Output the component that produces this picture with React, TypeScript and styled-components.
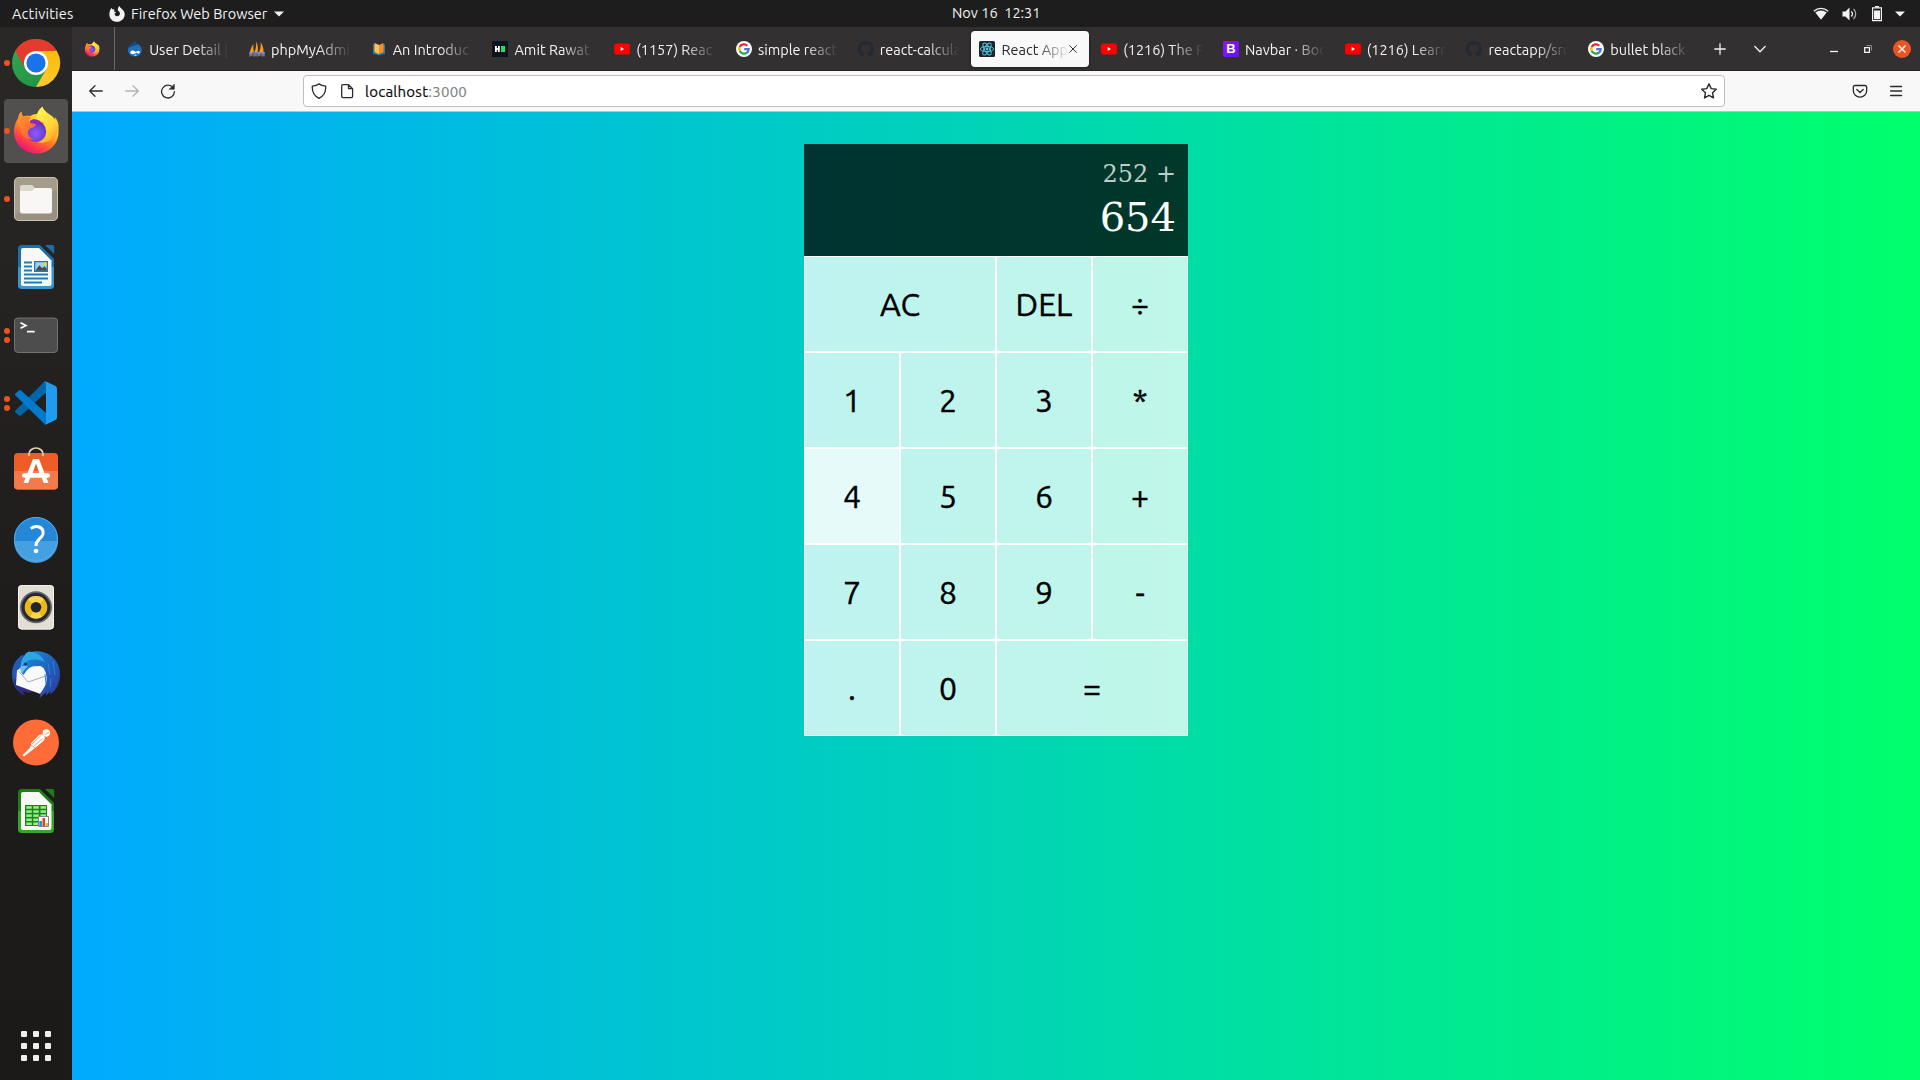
import React from 'react';
import styled, { createGlobalStyle, css } from 'styled-components';

const UI_FONT = `Ubuntu, "Noto Sans", "Open Sans", sans-serif`;

const GlobalStyle = createGlobalStyle`
  *, *::before, *::after { box-sizing: border-box; }
  html, body { margin: 0; padding: 0; overflow: hidden; background: #1d1d1d; }
  button { font: inherit; color: inherit; border: 0; padding: 0; background: none; }
  svg { display: block; flex: none; }
`;

const Desktop = styled.div`
  width: 1920px;
  height: 1080px;
  display: grid;
  grid-template: 27px 1053px / 72px 1848px;
  font-family: ${UI_FONT};
  overflow: hidden;
`;

/* ---------- top bar ---------- */

const TopBar = styled.header`
  grid-column: 1 / -1;
  display: grid;
  grid-template-columns: 952px 1fr auto;
  align-items: center;
  background: #1d1d1d;
  color: #f2f2f2;
  font-size: 14.5px;
  line-height: 27px;
  white-space: pre;
`;

const BarLeft = styled.div`
  display: flex;
  align-items: center;
  padding-left: 12px;
`;

const Activities = styled.span`
  width: 97px;
  letter-spacing: 0.2px;
`;

const AppName = styled.span`
  width: 144px;
  padding-left: 6px;
`;

const Clock = styled.span`
  line-height: 25px;
  padding-bottom: 2px;
`;

const BarRight = styled.div`
  display: flex;
  align-items: center;
  padding-right: 15px;
`;

const Spacer = styled.span<{ $w: number }>`
  width: ${(p) => p.$w}px;
  flex: none;
`;

/* ---------- dock ---------- */

const Dock = styled.nav`
  display: flex;
  flex-direction: column;
  align-items: center;
  gap: 4px;
  padding: 4px 0 2px;
  background: linear-gradient(#2a2826, #1e1d1b 55%, #1b1a19);
`;

const DockItem = styled.div<{ $active?: boolean }>`
  position: relative;
  width: 64px;
  height: 64px;
  flex: none;
  border-radius: 4px;
  background: ${(p) => (p.$active ? '#51504e' : 'transparent')};
`;

const Dots = styled.span`
  position: absolute;
  left: 0;
  top: 0;
  bottom: 0;
  display: flex;
  flex-direction: column;
  justify-content: center;
  gap: 3px;
`;

const Dot = styled.i`
  width: 6px;
  height: 6px;
  border-radius: 50%;
  background: #e95420;
`;

const AppsGrid = styled.div`
  margin-top: auto;
  margin-bottom: 17px;
  display: grid;
  grid-template-columns: repeat(3, 6px);
  gap: 6px;
`;

const AppsDot = styled.i`
  height: 6px;
  border-radius: 1px;
  background: #efefed;
`;

/* ---------- browser ---------- */

const Browser = styled.main`
  display: flex;
  flex-direction: column;
`;

const TabStrip = styled.div`
  height: 44px;
  display: flex;
  align-items: center;
  background: #323031;
  border-bottom: 1px solid #232122;
  color: #f4f4f4;
  font-size: 14.5px;
`;

const PinnedTab = styled.div`
  width: 43px;
  height: 43px;
  display: flex;
  align-items: center;
  padding-left: 12px;
  border-right: 1px solid #6b6a6b;
  margin-right: 2.2px;
`;

const Tab = styled.div<{ $active?: boolean }>`
  width: 117.75px;
  height: 36px;
  margin: 0 2px;
  padding: 0 8px;
  flex: none;
  display: flex;
  align-items: center;
  border-radius: 4px;
  ${(p) =>
    p.$active &&
    css`
      background: #f9f9f9;
      color: #2a2a2e;
      box-shadow: 0 0 3px rgba(0, 0, 0, 0.6);
    `}
`;

const TabLabel = styled.span`
  flex: 1;
  min-width: 0;
  margin-left: 6px;
  overflow: hidden;
  white-space: nowrap;
  line-height: 22px;
  padding-top: 2px;
  mask-image: linear-gradient(to left, transparent 0, #000 32px);
`;

const Toolbar = styled.div`
  height: 41px;
  display: flex;
  align-items: center;
  background: #f8f8f8;
  border-bottom: 1px solid #c4c0bf;
`;

const UrlBar = styled.div`
  width: 1422px;
  height: 32px;
  display: flex;
  align-items: center;
  padding: 0 7px;
  border: 1px solid #bebebe;
  border-radius: 4px;
  background: #fff;
`;

const Url = styled.span`
  flex: 1;
  padding: 1px 0 0 10px;
  font-size: 15px;
  letter-spacing: 0.25px;
  line-height: 22px;
  color: #0c0c0d;
  -webkit-text-stroke: 0.2px currentColor;
`;

const Port = styled.span`
  color: #858585;
`;

const Page = styled.section`
  flex: 1;
  padding-top: 32px;
  background: linear-gradient(to right, #00aaff, #00ff6c);
`;

/* ---------- calculator ---------- */

const Calculator = styled.div`
  display: grid;
  justify-content: center;
  grid-template-columns: repeat(4, 96px);
  grid-template-rows: 112px repeat(5, 96px);
`;

const Output = styled.div`
  grid-column: 1 / -1;
  display: flex;
  flex-direction: column;
  align-items: flex-end;
  gap: 6px;
  padding: 16px 12px 12px;
  background: rgba(0, 0, 0, 0.75);
  font-family: "DejaVu Serif", serif;
`;

const Previous = styled.div`
  color: rgba(255, 255, 255, 0.75);
  font-size: 24px;
  line-height: 28px;
`;

const Current = styled.div`
  color: #fff;
  font-size: 40px;
  line-height: 47px;
`;

const Key = styled.button<{ $wide?: boolean; $hover?: boolean }>`
  grid-column: span ${(p) => (p.$wide ? 2 : 1)};
  border: 1px solid #fff;
  background: rgba(255, 255, 255, ${(p) => (p.$hover ? 0.9 : 0.75)});
  background-clip: padding-box;
  color: #000;
  font-family: ${UI_FONT};
  font-size: 32px;
  line-height: 40px;
  padding-bottom: 1px;
  -webkit-text-stroke: 0.4px #000;
`;

/* ---------- small icons ---------- */

const FirefoxArt = () => (
  <>
    <defs>
      <linearGradient id="ffBody" x1="0.85" y1="0.1" x2="0.3" y2="1">
        <stop offset="0" stopColor="#fff04a" />
        <stop offset="0.3" stopColor="#ffc02b" />
        <stop offset="0.55" stopColor="#ff7a25" />
        <stop offset="0.8" stopColor="#ff3750" />
        <stop offset="1" stopColor="#e5107c" />
      </linearGradient>
      <radialGradient id="ffGlobe" cx="0.5" cy="0.6" r="0.6">
        <stop offset="0" stopColor="#9059ff" />
        <stop offset="0.6" stopColor="#6e45d8" />
        <stop offset="1" stopColor="#5b35b0" />
      </radialGradient>
      <linearGradient id="ffTail" x1="0.2" y1="0" x2="0.8" y2="1">
        <stop offset="0" stopColor="#fff44f" />
        <stop offset="0.6" stopColor="#ffd338" />
        <stop offset="1" stopColor="#ff9a28" />
      </linearGradient>
      <linearGradient id="ffHead" x1="0" y1="0" x2="1" y2="1">
        <stop offset="0" stopColor="#ff9a1f" />
        <stop offset="0.6" stopColor="#ff7139" />
        <stop offset="1" stopColor="#ff4a4a" />
      </linearGradient>
    </defs>
    <path fill="url(#ffBody)" d="M10 33c0-6 1.500-10 4-13.500 .3-3 1.700-5.500 3.500-7 0 2 .5 3.800 1.500 5 3 -1 5-.8 7-.3 6-4 12-2 16 3l9.500 3c2.500 4 3.200 7 3 10.500C54 46 44.500 54.500 32.500 54.500 20 54.500 10 45 10 33z" />
    <path fill="url(#ffTail)" d="M38.500 7.500c-5 4-6.500 8.500-6 13.500 5 .5 9 4 9.500 9.500.6 6-3 11-8 13 9 1 18.500-4 20.500-13 .8-5-.8-9-3.500-12.500l.3 2.500c-1.500-2-3-3.300-5.300-4.800-4-2.700-6.700-5-7.500-8.200z" />
    <circle cx="31.700" cy="32.500" r="10.500" fill="url(#ffGlobe)" />
    <path fill="#8a2bc0" d="M26 22c3-2.800 8-2 11.500 1.500l2.500.5c-2 1-3.500 1.500-5 3-3-2-6-1.500-9-1z" />
    <path fill="url(#ffHead)" d="M14 19.500c1-2 2-3.500 3.500-7 0 2 .5 4 1.700 5.200 3-.8 5.300-.5 7.300.6-1 1.500-1.500 3-1.300 4.700 2 1.500 4.300 1.600 6.800 2-1.500 4-5 3.500-7 5.500-3 4 .5 9 5.500 10-8 1.500-14-4-14-11-2.500-3-3.500-6-2.500-10z" />
  </>
);

const FirefoxSmall = () => (
  <svg width="16" height="16" viewBox="8 7 48 49">
    <FirefoxArt />
  </svg>
);

const FirefoxMono = () => (
  <svg width="16" height="16" viewBox="0 0 16 16">
    <path fill="#f2f2f2" fillRule="evenodd" d="M1.200 4 2.600 1.800 3.200 3.300 5.600 3.500 5 5.400 7.200 6.200 5.600 7.600C5.500 9 6.400 10.200 8 10.300c2 0 3.200-1.500 2.900-3.200C10.600 5.700 9.500 5 8.800 4.600 8.600 2.600 9.400 1 10.700.1c.3 1.900 1.700 2.400 2.900 3.600C15 5 15.800 6.700 15.700 8.500 15.500 12.700 12.200 15.800 8 15.800 3.700 15.800.4 12.500.4 8.400.4 6.700.6 5.200 1.200 4z" />
  </svg>
);

const Caret = () => (
  <svg width="10" height="6" viewBox="0 0 10 6">
    <path fill="#f2f2f2" d="M0 .5h10L5 5.500z" />
  </svg>
);

const Wifi = () => (
  <svg width="16" height="14" viewBox="0 0 16 14">
    <path fill="none" stroke="#f2f2f2" strokeWidth="1.300" d="M.8 4.300C5 .3 11 .3 15.200 4.300" />
    <path fill="#f2f2f2" d="M2.300 5.500c3.400-2.800 8-2.800 11.400 0L8 12.800z" />
  </svg>
);

const Volume = () => (
  <svg width="16" height="14" viewBox="0 0 16 14">
    <path fill="#f2f2f2" d="M.5 4.500h3L7.500.5v13l-4-4h-3z" />
    <path fill="none" stroke="#f2f2f2" strokeWidth="1.300" d="M9.300 4.500c1.300 1.400 1.300 3.600 0 5" />
    <path fill="none" stroke="#aaa" strokeWidth="1.300" d="M11.500 2c2.900 2.800 2.900 7.200 0 10" />
  </svg>
);

const Battery = () => (
  <svg width="10" height="16" viewBox="0 0 10 16">
    <path fill="#f2f2f2" d="M3 0h4v1.500H3z" />
    <path fill="none" stroke="#f2f2f2" strokeWidth="1.200" d="M.6 1.900h8.800v12.700H.6z" />
    <path fill="#f2f2f2" d="M2 4.500h6v8.700H2z" />
  </svg>
);

const Fav = ({ children }: { children: React.ReactNode }) => (
  <svg width="16" height="16" viewBox="0 0 16 16">
    {children}
  </svg>
);

const Drupal = () => (
  <Fav>
    <path fill="#1f6fbf" d="M7.600.5c1.200 1.700 2.300 2 3.800 3 2 1.300 3.400 3.200 3.400 5.700 0 3.600-3 6.300-6.900 6.300S.9 12.700.9 9.200c0-2.500 1.500-4.600 3.500-5.800C6 2.500 7.100 2 7.600.5z" />
    <path fill="#0d4c8c" d="M7.600.5c1.200 1.700 2.300 2 3.800 3C8.500 4.300 4.600 5 1.500 7c.5-1.600 1.600-2.800 2.900-3.600C6 2.500 7.100 2 7.600.5z" />
    <path fill="#fff" d="M3.300 11.300c.2-1.500 2-2.100 3.400-1.500 1.100.4 1.600 1 2.200 1 .9 0 1.500-1 2.600-1 1.100 0 1.600.8 1.300 1.800-.3 1-1.300 1.400-2.100.8-.7-.5-1.100-.8-1.800-.3-1 .7-1.700 1.100-3.100 1.100-1.500 0-2.600-.6-2.500-1.900zM7 14.200c1 .6 2 .6 3 0-.8-.8-2-.8-3 0z" />
  </Fav>
);

const PhpMyAdmin = () => (
  <Fav>
    <path fill="#f79a1b" d="M4.500 3C2.500 6 1.500 8 .8 11.300L5 11C4.200 8 4.200 5.500 4.500 3zM7.200.5c1.800 3.500 2.200 7 1.300 10.700H5.300C7 7.700 7.300 4.300 7.200.5zM11.500 1c2.300 3.300 3.200 6.500 3 10.200H10c1.500-3.200 2-6.500 1.500-10.200z" />
    <path fill="none" stroke="#7b7fc0" strokeWidth="1.200" d="M1 15.500v-3.300h2v2H1M5 15.500v-3.300M5 14h2m0-2v3.500M9 15.500v-3.300h2v2H9M13 15.500v-3.300h2v3.300M13 14h2" />
    <path fill="#a9a9cf" d="M0 11.400h16v.9H0z" />
  </Fav>
);

const Book = () => (
  <Fav>
    <path fill="#2d7fa8" d="M2 3.300l6 1.400 6-1.400v9.500L8 14.300l-6-1.500z" />
    <path fill="#ffc24a" d="M3.500 2 8 4v9l-4.500-2z" />
    <path fill="#f28f2c" d="M12.500 2 8 4v9l4.500-2z" />
  </Fav>
);

const HackerRank = () => (
  <Fav>
    <path fill="#0e141e" d="M0 0h16v16H0z" />
    <path fill="#fff" d="M3 5h1.800v2H6V5h1.800v6H6V9H4.800v2H3z" />
    <path fill="#1ee35b" d="M9 5h4v6H9z" />
  </Fav>
);

const YouTube = () => (
  <Fav>
    <rect x="0" y="2.500" width="16" height="11" rx="2.800" fill="#f00" />
    <path fill="#fff" d="M6.700 6v4l3.300-2z" />
  </Fav>
);

const Google = () => (
  <Fav>
    <circle cx="8" cy="8" r="8" fill="#fff" />
    <g fill="none" strokeWidth="2.300">
      <path stroke="#ea2a33" d="M3.700 6.100A4.700 4.700 0 0 1 11.300 4.700" />
      <path stroke="#fbbc05" d="M3.800 10.100A4.700 4.700 0 0 1 3.700 6" />
      <path stroke="#22a852" d="M3.700 9.900A4.700 4.700 0 0 0 11 11.600" />
      <path stroke="#5470e8" d="M8.200 8.100h4.500A4.700 4.700 0 0 1 10.800 11.800" />
    </g>
  </Fav>
);

const GitHub = () => (
  <Fav>
    <path fill="#24292e" d="M8 0C3.580 0 0 3.580 0 8c0 3.540 2.290 6.530 5.470 7.590.4.070.55-.17.55-.38v-1.490c-2.010.37-2.530-.49-2.690-.94-.09-.23-.48-.94-.82-1.130-.28-.15-.68-.52-.01-.53.63-.01 1.080.58 1.230.82.72 1.210 1.870.87 2.330.66.070-.52.28-.87.51-1.070-1.780-.2-3.640-.89-3.640-3.950 0-.87.31-1.590.82-2.150-.08-.2-.36-1.020.08-2.120 0 0 .67-.21 2.200.82a7.600 7.600 0 0 1 4 0c1.530-1.040 2.200-.82 2.200-.82.44 1.100.16 1.920.08 2.120.51.56.82 1.270.82 2.150 0 3.070-1.870 3.750-3.650 3.950.29.25.54.73.54 1.480v2.200c0 .21.15.46.55.38A8 8 0 0 0 16 8c0-4.420-3.580-8-8-8z" />
  </Fav>
);

const ReactFav = () => (
  <Fav>
    <rect width="16" height="16" rx="1.500" fill="#20232a" />
    <g fill="none" stroke="#54c8e4" strokeWidth="0.9">
      <ellipse cx="8" cy="8" rx="6.700" ry="2.600" />
      <ellipse cx="8" cy="8" rx="6.700" ry="2.600" transform="rotate(60 8 8)" />
      <ellipse cx="8" cy="8" rx="6.700" ry="2.600" transform="rotate(120 8 8)" />
    </g>
    <circle cx="8" cy="8" r="1.400" fill="#54c8e4" />
  </Fav>
);

const BootstrapBox = styled.span`
  width: 16px;
  height: 16px;
  flex: none;
  border-radius: 2px;
  background: linear-gradient(135deg, #9013fe, #6610f2);
  color: #fff;
  font: bold 13px/16px "Liberation Sans", sans-serif;
  text-align: center;
`;

const CloseTab = () => (
  <svg width="8" height="8" viewBox="0 0 8 8">
    <path stroke="#333" strokeWidth="1" d="M.3.300 7.700 7.700M7.700.300.3 7.700" />
  </svg>
);

const StripIcon = ({ w, children }: { w: number; children: React.ReactNode }) => (
  <svg width={w} height={w} viewBox={`0 0 ${w} ${w}`} fill="none" stroke="#f4f4f4" strokeWidth="1.300">
    {children}
  </svg>
);

const ToolIcon = ({ color = '#2b2a2e', children }: { color?: string; children: React.ReactNode }) => (
  <svg width="16" height="16" viewBox="0 0 16 16" fill="none" stroke={color} strokeWidth="1.300" strokeLinecap="round" strokeLinejoin="round">
    {children}
  </svg>
);

/* ---------- dock icons, each drawn on a 64px canvas ---------- */

const Canvas = ({ children }: { children: React.ReactNode }) => (
  <svg width="64" height="64" viewBox="0 0 64 64">
    {children}
  </svg>
);

const ChromeIcon = () => (
  <Canvas>
    <defs>
      <linearGradient id="crG" x1="0" y1="0" x2="1" y2="1"><stop offset="0" stopColor="#34a853" /><stop offset="1" stopColor="#1e8e3e" /></linearGradient>
      <linearGradient id="crY" x1="0" y1="0" x2="0" y2="1"><stop offset="0" stopColor="#fbbc04" /><stop offset="1" stopColor="#fcc934" /></linearGradient>
    </defs>
    <circle cx="32" cy="32" r="24" fill="url(#crG)" />
    <path fill="url(#crY)" d="M32 20h20.800A24 24 0 0 1 32 56L42.400 38z" />
    <path fill="#e33b2e" d="M11.200 20A24 24 0 0 1 52.800 20H32L21.600 38z" />
    <circle cx="32" cy="32" r="12" fill="#fff" />
    <circle cx="32" cy="32" r="9.600" fill="#1a73e8" />
  </Canvas>
);

const FilesIcon = () => (
  <Canvas>
    <rect x="10" y="10" width="44" height="44" rx="5" fill="#a49d8c" />
    <path fill="#989181" d="M10.500 48 53 22v27a5 5 0 0 1-5 5H15.500a5 5 0 0 1-5-5z" />
    <rect x="10.500" y="10.500" width="43" height="43" rx="4.500" fill="none" stroke="#c9c3b5" />
    <path fill="#dcd8cf" d="M16 20q0-2 2-2h10l3.500 3.500V28H16z" />
    <path fill="#f8f7f5" d="M16 24h12l3-3h15q2 0 2 2v21q0 2.500-2.500 2.500h-27Q16 46.500 16 44z" />
  </Canvas>
);

const Sheet = ({ dark, light, children }: { dark: string; light: string; children: React.ReactNode }) => (
  <Canvas>
    <path fill={dark} d="M18 10h18l14 14v26a4 4 0 0 1-4 4H18a4 4 0 0 1-4-4V14a4 4 0 0 1 4-4z" />
    <path fill={light} d="M14 32h36v18a4 4 0 0 1-4 4H18a4 4 0 0 1-4-4z" />
    <path fill={dark} d="M41 10h7.500a1.700 1.700 0 0 1 1.700 1.700V19z" />
    <path fill="#f8f8f7" d="M19 13h16l12.500 12.500V49q0 2-2 2H19q-2 0-2-2V15q0-2 2-2z" />
    {children}
  </Canvas>
);

const WriterIcon = () => (
  <Sheet dark="#1c6fa8" light="#3b95cc">
    <path fill="#1c7cb8" d="M20 26.500h8v2h-8zM20 30.500h8v2h-8zM20 34.500h8v2h-8zM20 38.500h24v2H20zM20 42.500h24v2H20zM20 46.500h18v2H20z" />
    <path fill="#1c7cb8" d="M30 26h14v11H30z" />
    <path fill="#9dd3f2" d="M31.300 27.300h11.400v8.400H31.300z" />
    <circle cx="41.300" cy="29" r="1.700" fill="#f6d32d" />
    <path fill="#4b4b4b" d="m31.300 35.700 4-5.500 3 3 2-2 2.400 2.500v2z" />
  </Sheet>
);

const CalcSheetIcon = () => (
  <Sheet dark="#1e7d14" light="#37a42c">
    <path fill="#158915" d="M21 26h22v21H21z" />
    <g fill="#9eea8c">
      {[27.2, 31.3, 35.4, 39.5, 43.5].map((y) =>
        [22.300, 29.300, 36.500].map((x) => <rect key={`${x}-${y}`} x={x} y={y} width="5.500" height="2.500" />),
      )}
    </g>
    <path fill="#fff" stroke="#858585" d="M34.500 37.500h10v10h-10z" />
    <path fill="#2d8fd4" d="M35.300 42h2.700v5h-2.700z" />
    <path fill="#d2491e" d="M38.500 39h2.500v8h-2.500z" />
    <path fill="#f0b429" d="M41.500 44h2.500v3h-2.500z" />
  </Sheet>
);

const TerminalIcon = () => (
  <Canvas>
    <rect x="10.500" y="15" width="43" height="34.500" rx="3.500" fill="#4d4d4d" stroke="#727272" />
    <path fill="none" stroke="#fff" strokeWidth="1.700" d="m16.500 19.700 5.500 2.800-5.500 2.800M23 28.700h7.700" />
  </Canvas>
);

const CodeIcon = () => (
  <Canvas>
    <path fill="#0065a9" d="M42 10.500v11L17 44.500q-1 .8-2 0l-3.500-3q-1-1 0-2L39.500 11.500z" />
    <path fill="#007acc" d="M42 53V42L17 19.500q-1-.8-2 0l-3.500 3q-1 1 0 2L39.500 52z" />
    <path fill="#1f9cf0" d="M42 10.500 51.500 15q1.500.8 1.500 2.500v29q0 1.700-1.500 2.500L42 53.500q-1.500.4-2.800-.9 2.800 1 2.800-1.500V13q0-2.500-2.800-1.500Q40.500 10 42 10.500z" />
  </Canvas>
);

const SoftwareIcon = () => (
  <Canvas>
    <path fill="#ee5d26" d="M14 14h36a4 4 0 0 1 4 4v28.500a4 4 0 0 1-4 4H14a4 4 0 0 1-4-4V18a4 4 0 0 1 4-4z" />
    <path fill="#f37a4b" d="M10 32h44v14.500a4 4 0 0 1-4 4H14a4 4 0 0 1-4-4z" />
    <path fill="none" stroke="#e6cfa6" strokeWidth="1.700" d="M25 17v-2a7 6 0 0 1 14 0v2" />
    <path fill="#fff" fillRule="evenodd" d="M29 20h6l9.500 24h-4.800l-2.500-6.500H26.800L24.300 44h-4.800zM32 24.500 28.600 34h6.800z" />
    <rect x="18" y="34.200" width="28" height="4.600" rx="2.300" fill="#fff" />
  </Canvas>
);

const HelpIcon = () => (
  <Canvas>
    <circle cx="32" cy="32" r="22" fill="#2487d8" />
    <path fill="#45a0e2" d="M10 34h44a22 22 0 0 1-44 0z" />
    <circle cx="32" cy="32" r="21.500" fill="none" stroke="#58a9e6" />
    <path fill="none" stroke="#fff" strokeWidth="3" d="M26.700 21.500c3-2 6-2.500 8.500-1.500 4 1.500 5.300 6 2.500 9.500-2.500 3-5.700 4-5.700 9.500" />
    <circle cx="32" cy="44" r="2.300" fill="#fff" />
  </Canvas>
);

const MusicIcon = () => (
  <Canvas>
    <rect x="14" y="10" width="36" height="44.500" rx="4" fill="#e2ded4" />
    <rect x="14.500" y="10.500" width="35" height="43.500" rx="3.500" fill="none" stroke="#f3f1ec" />
    <circle cx="32" cy="32.300" r="16" fill="#62646c" />
    <circle cx="32" cy="32.300" r="14.300" fill="#262932" />
    <circle cx="32" cy="32.300" r="11.300" fill="#e9b91c" />
    <path fill="#f5d552" d="M32 32.300 24 24.300a11.300 11.300 0 0 1 16 0zM32 32.300l-6 9.500a11.300 11.300 0 0 0 12 0z" />
    <circle cx="32" cy="32.300" r="5.300" fill="#24262b" />
  </Canvas>
);

const ThunderbirdIcon = () => (
  <Canvas>
    <defs>
      <linearGradient id="tbB" x1="0" y1="0" x2="1" y2="1"><stop offset="0" stopColor="#1c93d8" /><stop offset="0.5" stopColor="#1f62bd" /><stop offset="1" stopColor="#2f359f" /></linearGradient>
    </defs>
    <path fill="#2458b4" d="M18 12C11 17 8 23.500 8 31c0 10 5 18 12.500 21.500L38 50 50 20z" />
    <path fill="#312c83" d="M10 39c2 7 6 11.500 11 13.500l-1-4 6 1 4-2-19-12z" />
    <path fill="#1e1d1b" d="M20.500 53l-1.500-5 6 1.500 5-1.500 8 3-6 4z" />
    <path fill="#f9f9fb" d="M13 27.500 17.500 24 42 22.500 44 38 36.500 51 12 42z" />
    <path fill="none" stroke="#a9abb4" d="m14.500 28 9.500 11 18-6" />
    <path fill="url(#tbB)" d="M21 12C25 8.500 33 7.500 39 9c10 2.500 17 11.500 17 22 0 9-4 17-10 20l.3-2.500-4.300 4 .5-3.500-7 6 1-5c7-7 8-17 3-25-3-3-7-3-10-2-5 1.500-7 4.500-10 9l-2-2C15.500 24 17 16 21 12z" />
    <path fill="#2aa7e4" d="M25 8.500c-3 1-4.500 3-4.500 4.500-2.500 2.500-4 7-3.700 12 3.500-7 9-8.500 14-8.500 4 0 8 1 10 3-2-6-8-10-13-10.500z" />
    <path fill="#6cc1ec" d="M17 23c-1.500 3-.5 5.500 1 7.500 1.500-3 4-5 6-7.500z" />
    <path fill="none" stroke="#2b83d3" d="m44 20 2 12M49 18l2 14M41 31l1 10M47 35l-1 9" />
    <circle cx="21.500" cy="21" r="1.300" fill="#1c2233" />
  </Canvas>
);

const PostmanIcon = () => (
  <Canvas>
    <circle cx="32" cy="31.500" r="23" fill="#ff6c37" />
    <circle cx="42.300" cy="22" r="3.700" fill="#fff" />
    <path stroke="#ff6c37" strokeWidth="0.800" d="m41.500 23.500 3.500-2.500" />
    <path fill="#fff" d="M38.500 23.500c1 .5 2 1.700 2.300 2.700.3 2-1.500 4-3.500 5.500L33.500 35 20 45.500l-1.500-1.300 7-7 1.700-3.500c-.5-1 0-1.700 1-2.700l6-6c1.500-1.300 3-1.700 4.300-1.500z" />
    <path fill="none" stroke="#ff6c37" strokeWidth="0.700" d="m28 33 8.500-8M29.500 35.500l9-8M27 34l4 3" />
  </Canvas>
);

const FirefoxIcon = () => (
  <Canvas>
    <FirefoxArt />
  </Canvas>
);

/* ---------- data ---------- */

const dockApps = [
  { name: 'chrome', icon: <ChromeIcon />, dots: 1 },
  { name: 'firefox', icon: <FirefoxIcon />, dots: 1, active: true },
  { name: 'files', icon: <FilesIcon />, dots: 1 },
  { name: 'writer', icon: <WriterIcon />, dots: 0 },
  { name: 'terminal', icon: <TerminalIcon />, dots: 2 },
  { name: 'code', icon: <CodeIcon />, dots: 2 },
  { name: 'software', icon: <SoftwareIcon />, dots: 0 },
  { name: 'help', icon: <HelpIcon />, dots: 0 },
  { name: 'music', icon: <MusicIcon />, dots: 0 },
  { name: 'thunderbird', icon: <ThunderbirdIcon />, dots: 0 },
  { name: 'postman', icon: <PostmanIcon />, dots: 0 },
  { name: 'calc', icon: <CalcSheetIcon />, dots: 0 },
];

const tabs = [
  { label: 'User Detail |', icon: <Drupal /> },
  { label: 'phpMyAdmi', icon: <PhpMyAdmin /> },
  { label: 'An Introduc', icon: <Book /> },
  { label: 'Amit Rawat', icon: <HackerRank /> },
  { label: '(1157) Reac', icon: <YouTube /> },
  { label: 'simple react', icon: <Google /> },
  { label: 'react-calcula', icon: <GitHub /> },
  { label: 'React App', icon: <ReactFav />, active: true },
  { label: '(1216) The P', icon: <YouTube /> },
  { label: 'Navbar · Boo', icon: <BootstrapBox>B</BootstrapBox> },
  { label: '(1216) Learn', icon: <YouTube /> },
  { label: 'reactapp/src', icon: <GitHub /> },
  { label: 'bullet black', icon: <Google /> },
];

const keys = [
  { t: 'AC', wide: true }, { t: 'DEL' }, { t: '÷' },
  { t: '1' }, { t: '2' }, { t: '3' }, { t: '*' },
  { t: '4', hover: true }, { t: '5' }, { t: '6' }, { t: '+' },
  { t: '7' }, { t: '8' }, { t: '9' }, { t: '-' },
  { t: '.' }, { t: '0' }, { t: '=', wide: true },
];

export default function App() {
  return (
    <>
      <GlobalStyle />
      <Desktop>
        <TopBar>
          <BarLeft>
            <Activities>Activities</Activities>
            <FirefoxMono />
            <AppName>Firefox Web Browser</AppName>
            <Spacer $w={5} />
            <Caret />
          </BarLeft>
          <Clock>{'Nov 16  12:31'}</Clock>
          <BarRight>
            <Wifi />
            <Spacer $w={13} />
            <Volume />
            <Spacer $w={14} />
            <Battery />
            <Spacer $w={13} />
            <Caret />
          </BarRight>
        </TopBar>

        <Dock>
          {dockApps.map((app) => (
            <DockItem key={app.name} $active={app.active}>
              {app.icon}
              <Dots>
                {Array.from({ length: app.dots }, (_, i) => (
                  <Dot key={i} />
                ))}
              </Dots>
            </DockItem>
          ))}
          <AppsGrid>
            {Array.from({ length: 9 }, (_, i) => (
              <AppsDot key={i} />
            ))}
          </AppsGrid>
        </Dock>

        <Browser>
          <TabStrip>
            <PinnedTab>
              <FirefoxSmall />
            </PinnedTab>
            {tabs.map((tab, i) => (
              <Tab key={i} $active={tab.active}>
                {tab.icon}
                <TabLabel>{tab.label}</TabLabel>
                {tab.active && (
                  <>
                    <CloseTab />
                    <Spacer $w={4} />
                  </>
                )}
              </Tab>
            ))}
            <Spacer $w={14} />
            <StripIcon w={12}><path d="M6 .3v11.400M.3 6h11.400" /></StripIcon>
            <Spacer $w={28} />
            <StripIcon w={12}><path d="m.4 3 5.600 5.700L11.600 3" /></StripIcon>
            <Spacer $w={64} />
            <StripIcon w={8}><path d="M0 6.500h8" /></StripIcon>
            <Spacer $w={26} />
            <StripIcon w={8}><path strokeWidth="1.300" d="M.7 2.700h4.700v4.700H.7z" /><path stroke="#8b8a8b" strokeWidth="1" d="M2.500.5h5v5" /></StripIcon>
            <Spacer $w={21} />
            <StripIcon w={18}>
              <circle cx="9" cy="9" r="9" fill="#e95420" stroke="none" />
              <path strokeWidth="1.500" d="m5.500 5.500 7 7M12.500 5.500l-7 7" />
            </StripIcon>
          </TabStrip>

          <Toolbar>
            <Spacer $w={16} />
            <ToolIcon><path d="M14.300 8H1.700M7 2.700 1.700 8 7 13.300" /></ToolIcon>
            <Spacer $w={20} />
            <ToolIcon color="#b3b3b5"><path d="M1.700 8h12.600M9 2.700 14.300 8 9 13.300" /></ToolIcon>
            <Spacer $w={20} />
            <ToolIcon>
              <path d="M13 4.600A6.400 6.400 0 1 0 14.400 8.600" />
              <path fill="#2b2a2e" strokeWidth="0.600" d="M14.300 1.500v4.800H9.500z" />
            </ToolIcon>
            <Spacer $w={127} />
            <UrlBar>
              <ToolIcon><path d="M8 .9c2.300 1.600 4.300 2 6.700 2.300C15 8.500 13 13 8 15.300 3 13 1 8.500 1.300 3.200 3.700 2.900 5.700 2.500 8 .9z" /></ToolIcon>
              <Spacer $w={12} />
              <ToolIcon><path d="M9.500 1.700H4q-1.300 0-1.300 1.300v10.300q0 1.300 1.300 1.300h8.300q1.300 0 1.300-1.300V5.700zV5.700h4" /></ToolIcon>
              <Url>localhost<Port>:3000</Port></Url>
              <ToolIcon><path strokeWidth="1.400" d="m8 .9 2.200 4.700 5.100.6-3.800 3.500 1 5.200L8 12.300l-4.500 2.600 1-5.200L.7 6.200l5.100-.6z" /></ToolIcon>
            </UrlBar>
            <Spacer $w={127} />
            <ToolIcon><path d="M3 2.500h10q1.700 0 1.700 1.700V7.500a6.700 6.700 0 0 1-13.400 0V4.200Q1.300 2.500 3 2.500zM4.800 6.500 8 9.500l3.200-3" /></ToolIcon>
            <Spacer $w={20} />
            <ToolIcon><path d="M2.600 3.500h11M2.600 8h11M2.600 12.500h11" /></ToolIcon>
          </Toolbar>

          <Page>
            <Calculator>
              <Output>
                <Previous>252 +</Previous>
                <Current>654</Current>
              </Output>
              {keys.map((k) => (
                <Key key={k.t} $wide={k.wide} $hover={k.hover}>
                  {k.t}
                </Key>
              ))}
            </Calculator>
          </Page>
        </Browser>
      </Desktop>
    </>
  );
}
